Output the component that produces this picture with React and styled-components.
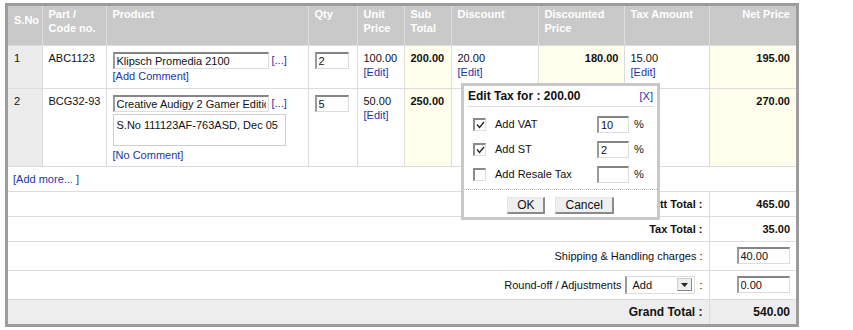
import React from 'react'
import styled, { createGlobalStyle } from 'styled-components'

const GlobalStyle = createGlobalStyle`
  body {
    margin: 0;
    background: #fff;
    font-family: "Liberation Sans", Arial, sans-serif;
    font-size: 11px;
    color: #111;
  }
`

const items = [
  { no: 1, code: 'ABC1123', product: 'Klipsch Promedia 2100', qty: '2', unit: '100.00', sub: '200.00', disc: '20.00', discounted: '180.00', tax: '15.00', net: '195.00' },
  { no: 2, code: 'BCG32-93', product: 'Creative Audigy 2 Gamer Edition', comment: 'S.No 111123AF-763ASD, Dec 05', qty: '5', unit: '50.00', sub: '250.00', disc: '', discounted: '', tax: '', net: '270.00' },
]

const taxes = [
  { label: 'Add VAT', value: '10', checked: true },
  { label: 'Add ST', value: '2', checked: true },
  { label: 'Add Resale Tax', value: '', checked: false },
]

function App() {
  return (
    <>
      <GlobalStyle />
      <Page>
        <Frame>
          <Table>
            <colgroup>
              <col style={{ width: 34 }} />
              <col style={{ width: 64 }} />
              <col style={{ width: 202 }} />
              <col style={{ width: 49 }} />
              <col style={{ width: 47 }} />
              <col style={{ width: 47 }} />
              <col style={{ width: 87 }} />
              <col style={{ width: 86 }} />
              <col style={{ width: 85 }} />
              <col style={{ width: 87 }} />
            </colgroup>
            <thead>
              <tr>
                <Th middle>S.No</Th>
                <Th>Part /<br />Code no.</Th>
                <Th>Product</Th>
                <Th>Qty</Th>
                <Th>Unit<br />Price</Th>
                <Th>Sub<br />Total</Th>
                <Th>Discount</Th>
                <Th>Discounted<br />Price</Th>
                <Th>Tax Amount</Th>
                <Th right>Net Price</Th>
              </tr>
            </thead>
            <tbody>
              {items.map((item, i) => (
                <tr key={item.no}>
                  <Td shade rowHeight={i === 0 ? 43 : 78}>{item.no}</Td>
                  <Td>{item.code}</Td>
                  <Td>
                    <ProductLine>
                      <TextInput width={156} defaultValue={item.product} />
                      <Link>[...]</Link>
                    </ProductLine>
                    {item.comment ? (
                      <>
                        <Comment>{item.comment}</Comment>
                        <Link block top={2}>[No Comment]</Link>
                      </>
                    ) : (
                      <Link block>[Add Comment]</Link>
                    )}
                  </Td>
                  <Td><QtyWrap><TextInput width={34} defaultValue={item.qty} /></QtyWrap></Td>
                  <Td>{item.unit}<br /><Link>[Edit]</Link></Td>
                  <Td yellow bold>{item.sub}</Td>
                  <Td>{item.disc}{item.disc && <><br /><Link>[Edit]</Link></>}</Td>
                  <Td yellow bold right>{item.discounted}</Td>
                  <Td>{item.tax}{item.tax && <><br /><Link>[Edit]</Link></>}</Td>
                  <Td yellow bold right>{item.net}</Td>
                </tr>
              ))}
              <tr>
                <AddMore colSpan={10}><Link>[Add more... ]</Link></AddMore>
              </tr>
              <tr>
                <Label colSpan={9} bold>Nett Total :</Label>
                <Value bold>465.00</Value>
              </tr>
              <tr>
                <Label colSpan={9} bold>Tax Total :</Label>
                <Value bold>35.00</Value>
              </tr>
              <tr>
                <Label colSpan={9} tall>Shipping &amp; Handling charges :</Label>
                <Value tall><TextInput width={53} defaultValue="40.00" /></Value>
              </tr>
              <tr>
                <Label colSpan={9} tall>
                  <Adjust>
                    Round-off / Adjustments
                    <SelectBox>
                      <span>Add</span>
                      <SelectArrow>
                        <svg width="7" height="4" viewBox="0 0 7 4"><path d="M0 0h7L3.5 4z" fill="#222" /></svg>
                      </SelectArrow>
                    </SelectBox>
                    :
                  </Adjust>
                </Label>
                <Value tall><TextInput width={53} defaultValue="0.00" /></Value>
              </tr>
              <GrandRow>
                <Label colSpan={9} bold big>Grand Total :</Label>
                <Value bold big>540.00</Value>
              </GrandRow>
            </tbody>
          </Table>
        </Frame>

        <Popup>
          <PopupHead>
            <span>Edit Tax for : 200.00</span>
            <Link>[X]</Link>
          </PopupHead>
          <TaxList>
            {taxes.map(t => (
              <TaxRow key={t.label}>
                <Check>
                  {t.checked && (
                    <svg width="9" height="8" viewBox="0 0 9 8"><path d="M1 3.5l2.5 3L8 1" stroke="#222" strokeWidth="1.3" fill="none" /></svg>
                  )}
                </Check>
                <TaxLabel>{t.label}</TaxLabel>
                <TextInput width={32} defaultValue={t.value} />
                <Percent>%</Percent>
              </TaxRow>
            ))}
          </TaxList>
          <PopupFoot>
            <Button>OK</Button>
            <Button>Cancel</Button>
          </PopupFoot>
        </Popup>
      </Page>
    </>
  )
}

export default App

const Page = styled.div`
  position: relative;
  width: 853px;
  height: 330px;
  padding: 3px 0 0 5px;
  box-sizing: border-box;
`

const Frame = styled.div`
  width: 788px;
  border: 3px solid #9c9c9c;
`

const Table = styled.table`
  width: 788px;
  table-layout: fixed;
  border-collapse: collapse;
  font-size: 11px;
`

const Th = styled.th`
  height: 39px;
  box-sizing: border-box;
  background: #c9c9c9;
  color: #fff;
  font-weight: bold;
  text-align: ${p => (p.right ? 'right' : 'left')};
  vertical-align: ${p => (p.middle ? 'middle' : 'top')};
  padding: ${p => (p.middle ? '0 6px 11px 6px' : '1px 6px 0 6px')};
  line-height: 14px;
  border-left: 1px solid #dedede;
  &:first-child { border-left: none; }
`

const Td = styled.td`
  box-sizing: border-box;
  height: ${p => (p.rowHeight ? `${p.rowHeight}px` : 'auto')};
  vertical-align: top;
  padding: 5px 5px 0 6px;
  line-height: 14px;
  text-align: ${p => (p.right ? 'right' : 'left')};
  font-weight: ${p => (p.bold ? 'bold' : 'normal')};
  background: ${p => (p.shade ? '#ececec' : p.yellow ? '#fffdec' : '#fff')};
  border: 1px solid #dcdcdc;
  &:first-child { border-left: none; }
  &:last-child { border-right: none; padding-right: 6px; }
`

const ProductLine = styled.div`
  display: flex;
  align-items: center;
  gap: 3px;
  margin-top: 1px;
`

const QtyWrap = styled.div`
  margin-top: 1px;
`

const TextInput = styled.input`
  box-sizing: border-box;
  width: ${p => p.width}px;
  height: 17px;
  padding: 0 2px;
  font: 11px "Liberation Sans", Arial, sans-serif;
  color: #111;
  background: #fff;
  border: 1px solid #dcdcdc;
  border-top: 2px solid #858585;
  border-left: 2px solid #9a9a9a;
  outline: none;
`

const Comment = styled.div`
  width: 173px;
  height: 32px;
  box-sizing: border-box;
  margin-top: 2px;
  padding: 4px 3px;
  border: 1px solid #cfcfcf;
  line-height: 13px;
`

const Link = styled.span`
  display: ${p => (p.block ? 'block' : 'inline')};
  margin-top: ${p => p.top || 0}px;
  color: #1d36a6;
  cursor: pointer;
`

const AddMore = styled.td`
  box-sizing: border-box;
  height: 25px;
  padding: 0 5px;
  border-top: 1px solid #dcdcdc;
  border-bottom: 1px solid #dcdcdc;
`

const Label = styled.td`
  height: ${p => (p.tall ? 29 : 25)}px;
  box-sizing: border-box;
  padding: 0 6px;
  text-align: right;
  font-weight: ${p => (p.bold ? 'bold' : 'normal')};
  font-size: ${p => (p.big ? 12 : 11)}px;
  border-top: 1px solid #dcdcdc;
  border-bottom: 1px solid #dcdcdc;
  border-right: 1px solid #dcdcdc;
`

const Value = styled.td`
  box-sizing: border-box;
  padding: 0 6px 0 27px;
  text-align: ${p => (p.tall ? 'left' : 'right')};
  font-weight: ${p => (p.bold ? 'bold' : 'normal')};
  font-size: ${p => (p.big ? 12 : 11)}px;
  border-top: 1px solid #dcdcdc;
  border-bottom: 1px solid #dcdcdc;
`

const GrandRow = styled.tr`
  background: #ededed;
  td { height: 25px; border-bottom: none; }
`

const Adjust = styled.div`
  display: inline-flex;
  align-items: center;
  gap: 4px;
`

const SelectBox = styled.div`
  display: inline-flex;
  align-items: center;
  justify-content: space-between;
  box-sizing: border-box;
  width: 70px;
  height: 18px;
  padding: 0 2px 0 5px;
  border: 1px solid #dcdcdc;
  border-left: 2px solid #9a9a9a;
  text-align: left;
`

const SelectArrow = styled.span`
  display: inline-flex;
  align-items: center;
  justify-content: center;
  width: 13px;
  height: 11px;
  background: #eee;
  border: 1px solid #ccc;
  border-right-color: #888;
  border-bottom-color: #888;
`

const Popup = styled.div`
  position: absolute;
  left: 461px;
  top: 83px;
  width: 199px;
  height: 137px;
  box-sizing: border-box;
  background: #fff;
  border: 3px solid #c8c8c8;
  display: flex;
  flex-direction: column;
`

const PopupHead = styled.div`
  display: flex;
  justify-content: space-between;
  align-items: center;
  margin: 0 3px;
  height: 20px;
  padding: 0 1px;
  font-size: 12px;
  font-weight: bold;
  border-bottom: 1px solid #ddd;
  ${Link} { font-weight: normal; font-size: 11px; }
`

const TaxList = styled.div`
  display: flex;
  flex-direction: column;
  gap: 7px;
  padding: 8px 0 6px 9px;
  border-bottom: 1px dotted #b9b9b9;
`

const TaxRow = styled.div`
  display: flex;
  align-items: center;
  height: 18px;
`

const Check = styled.span`
  display: inline-flex;
  align-items: center;
  justify-content: center;
  box-sizing: border-box;
  width: 13px;
  height: 13px;
  border: 1px solid #e0e0e0;
  border-top: 2px solid #8a8a8a;
  border-left: 2px solid #8a8a8a;
  margin-right: 9px;
`

const TaxLabel = styled.span`
  width: 102px;
`

const Percent = styled.span`
  margin-left: 5px;
`

const PopupFoot = styled.div`
  display: flex;
  justify-content: center;
  gap: 10px;
  padding-top: 7px;
`

const Button = styled.button`
  font: 12px "Liberation Sans", Arial, sans-serif;
  color: #111;
  height: 17px;
  padding: 0 9px;
  background: #efefef;
  border: 1px solid #e6e6e6;
  border-right: 2px solid #8a8a8a;
  border-bottom: 2px solid #8a8a8a;
  cursor: pointer;
`
